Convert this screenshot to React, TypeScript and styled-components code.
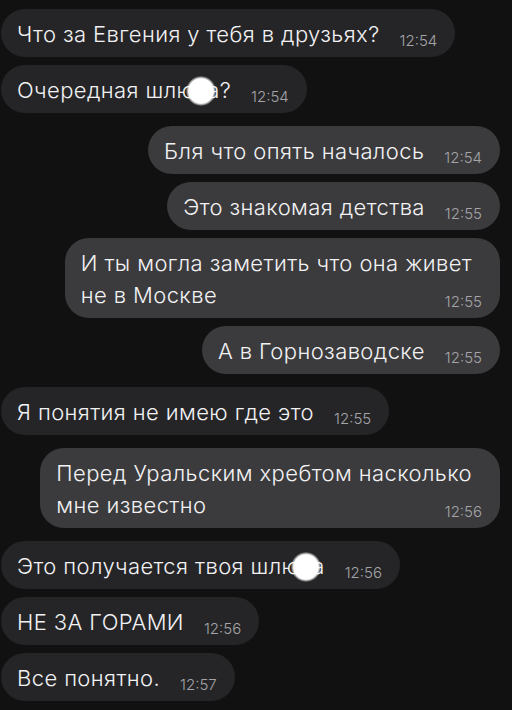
import styled, { createGlobalStyle } from "styled-components";

const GlobalStyle = createGlobalStyle`
  html, body {
    margin: 0;
    background: #111112;
  }
`;

const Chat = styled.div`
  display: flex;
  flex-direction: column;
  padding: 9px 12px 9px 1px;
  font-family: Inter, "Liberation Sans", sans-serif;
  -webkit-font-smoothing: antialiased;
`;

const Text = styled.div`
  grid-area: 1 / 1;
  color: #f2f2f4;
  font-size: 22px;
  font-weight: 350;
  line-height: 32px;
  letter-spacing: 0.4px;
  white-space: nowrap;
`;

const Time = styled.span`
  grid-area: 1 / 1;
  justify-self: end;
  align-self: end;
  color: #a4a4a8;
  font-size: 15px;
  font-weight: 350;
  line-height: 18px;
  white-space: nowrap;
`;

const Bubble = styled.div<{ $out?: boolean; $first?: boolean; $multi?: boolean }>`
  align-self: ${(p) => (p.$out ? "flex-end" : "flex-start")};
  margin-top: ${(p) => (p.$first ? "13px" : "8px")};
  background: ${(p) => (p.$out ? "#3b3b3d" : "#252527")};
  border-radius: 24px;
  padding: 9px 18px 7px 16px;
  display: ${(p) => (p.$multi ? "grid" : "flex")};
  align-items: flex-end;
  gap: 20px;
  &:first-child {
    margin-top: 0;
  }
  ${Text} {
    margin-right: ${(p) => (p.$multi ? "10px" : "0")};
  }
`;

const Censor = styled.span`
  position: relative;
  &::after {
    content: "";
    position: absolute;
    left: 50%;
    top: 55%;
    width: 30px;
    height: 30px;
    margin: -15px 0 0 -15px;
    border-radius: 50%;
    background: radial-gradient(circle, #ffffff 58%, rgba(255, 255, 255, 0) 72%);
  }
`;

type Msg = {
  out?: boolean;
  text: React.ReactNode;
  time: string;
  multi?: boolean;
};

const messages: Msg[] = [
  { text: "Что за Евгения у тебя в друзьях?", time: "12:54" },
  { text: <>Очередная шлю<Censor>к</Censor>а?</>, time: "12:54" },
  { out: true, text: "Бля что опять началось", time: "12:54" },
  { out: true, text: "Это знакомая детства", time: "12:55" },
  {
    out: true,
    multi: true,
    text: <>И ты могла заметить что она живет<br />не в Москве</>,
    time: "12:55",
  },
  { out: true, text: "А в Горнозаводске", time: "12:55" },
  { text: "Я понятия не имею где это", time: "12:55" },
  {
    out: true,
    multi: true,
    text: <>Перед Уральским хребтом насколько<br />мне известно</>,
    time: "12:56",
  },
  { text: <>Это получается твоя шлю<Censor>к</Censor>а</>, time: "12:56" },
  { text: "НЕ ЗА ГОРАМИ", time: "12:56" },
  { text: "Все понятно.", time: "12:57" },
];

export default function App() {
  return (
    <>
      <GlobalStyle />
      <Chat>
        {messages.map((m, i) => (
          <Bubble
            key={i}
            $out={m.out}
            $multi={m.multi}
            $first={i > 0 && !!messages[i - 1].out !== !!m.out}
          >
            <Text>{m.text}</Text>
            <Time>{m.time}</Time>
          </Bubble>
        ))}
      </Chat>
    </>
  );
}
